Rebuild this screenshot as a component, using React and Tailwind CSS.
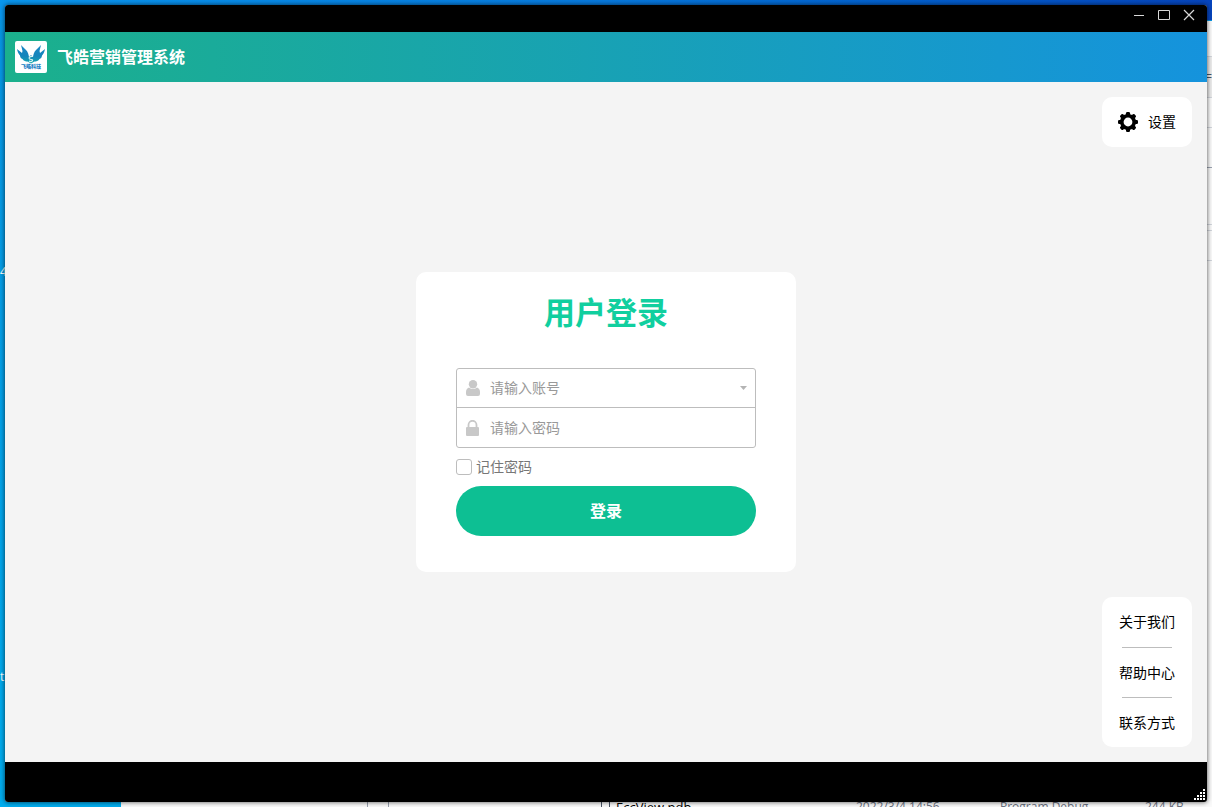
const helpLinks = ["关于我们", "帮助中心", "联系方式"];

const Logo = () => (
    <svg viewBox="0 0 32 32" className="size-8 shrink-0 rounded-xs bg-white" role="img" aria-label="飞皓科技">
        <defs>
            <linearGradient id="wings" x1="0" y1="0" x2="0" y2="1">
                <stop offset="0" stopColor="#1a86c6" />
                <stop offset="0.6" stopColor="#1585bb" />
                <stop offset="1" stopColor="#18a9b0" />
            </linearGradient>
        </defs>
        <path
            d="M2 8 L7 12 L7.500 10 L6 4 L11 9 C13 11 13.500 13 14 16 L16 14 L18 16 C18.500 13 19 11 21 9 L26 4 L24.500 10 L25 12 L30 8 C29.500 11 28.500 13 27 14.500 C27 16 26 17.500 24.500 18 C23.500 20 21 20.500 19.500 20.500 L16 22.500 L12.500 20.500 C11 20.500 8.500 20 7.500 18 C6 17.500 5 16 5 14.500 C3.500 13 2.500 11 2 8Z"
            fill="url(#wings)"
        />
        <path d="M18 15.500 C15 15 13.500 16.500 14.500 17.800 C15.500 19 18 18 17.500 19.500 C17 21 15 20.800 14 20" fill="none" stroke="#d6f5f0" strokeWidth="1.200" />
        <text x="16" y="27" textAnchor="middle" fontSize="5" fontWeight="900" fill="#1b7fc4" className="font-['Noto_Sans_CJK_SC',sans-serif]">
            飞皓科技
        </text>
    </svg>
);

const GearIcon = () => (
    <svg viewBox="0 0 20 20" className="size-5" aria-hidden="true">
        <g fill="#000">
            {[0, 45, 90, 135].map((angle) => (
                <rect key={angle} x="8" y="0" width="4" height="20" rx="1.200" transform={`rotate(${angle} 10 10)`} />
            ))}
            <circle cx="10" cy="10" r="8" />
        </g>
        <circle cx="10" cy="10" r="4.400" fill="#fff" />
    </svg>
);

const UserIcon = () => (
    <svg viewBox="0 0 14 16" className="h-4 w-3.5 shrink-0" fill="#c8c8c8" aria-hidden="true">
        <circle cx="7" cy="4.200" r="4.200" />
        <path d="M3 7.500 Q7 10.500 11 7.500 Q14 8.500 14 12 V14 Q14 16 12 16 H2 Q0 16 0 14 V12 Q0 8.500 3 7.500Z" />
    </svg>
);

const LockIcon = () => (
    <svg viewBox="0 0 14 16" className="h-4 w-3.5 shrink-0" aria-hidden="true">
        <path d="M2.500 8 V5 a4 4.200 0 0 1 8 0 V8" fill="none" stroke="#c8c8c8" strokeWidth="1.800" />
        <rect x="0" y="7" width="13" height="9" rx="1" fill="#c8c8c8" />
    </svg>
);

const ResizeGrip = () => (
    <svg viewBox="0 0 11 11" className="size-[11px]" fill="#fff" aria-hidden="true">
        {[0, 1, 2, 3].map((row) =>
            [0, 1, 2, 3]
                .filter((col) => col + row >= 3)
                .map((col) => <rect key={`${row}-${col}`} x={col * 3} y={row * 3} width="2" height="2" />)
        )}
    </svg>
);

// Whatever of the desktop shows around the edges of the window
const Desktop = () => (
    <div aria-hidden="true" className="absolute inset-0 overflow-hidden bg-linear-to-b from-[#0794e2] to-[#00adef] font-['Open_Sans',sans-serif] text-xs">
        <div className="absolute top-0 right-0 h-5 w-full bg-linear-to-r from-[#0997f0] via-[#0779de] to-[#0644bd]" />
        <div className="absolute top-[21px] right-0 bottom-0 w-20 bg-[#fafafa]">
            <div className="absolute top-[35px] right-0 h-[42px] w-full border-y border-gray-300 bg-[#ececec]" />
            <div className="absolute top-[106px] right-0 h-[41px] w-full border-t border-b border-gray-300 border-b-gray-400" />
            <div className="absolute top-[203px] right-0 h-[7px] w-full border-y border-gray-300" />
            <div className="absolute top-[239px] right-0 h-px w-full bg-gray-300" />
            <span className="absolute top-[48px] right-0 text-gray-600">=</span>
        </div>
        <div className="absolute right-0 bottom-0 left-[121px] h-5 bg-[#fafafa]">
            <div className="absolute bottom-0 left-[246px] h-full w-[22px] border-x border-gray-400" />
            <div className="absolute top-[13px] left-[480px] h-4 w-[9px] border border-gray-600" />
            <span className="absolute top-3 left-[495px] text-[13px] text-black">EccView.pdb</span>
            <span className="absolute top-3 left-[735px] whitespace-nowrap text-gray-500">2022/3/4 14:56</span>
            <span className="absolute top-3 left-[879px] whitespace-nowrap text-gray-500">Program Debug</span>
            <span className="absolute top-3 left-[1024px] whitespace-nowrap text-gray-500">244 KB</span>
        </div>
        <span className="absolute top-[264px] left-0 text-white">4</span>
        <span className="absolute top-[669px] left-0 text-white">t</span>
    </div>
);

const TitleBar = () => (
    <div className="flex h-[27px] shrink-0 items-start justify-end gap-[13px] bg-black pt-1 pr-3 text-[#d8d8d8]">
        <button type="button" aria-label="最小化">
            <svg viewBox="0 0 12 12" className="size-3" stroke="currentColor" fill="none">
                <path d="M1 6.500 H11" />
            </svg>
        </button>
        <button type="button" aria-label="最大化">
            <svg viewBox="0 0 12 12" className="size-3" stroke="currentColor" fill="none">
                <path d="M0.500 1.500 H11.500 V10.500 H0.500Z" />
            </svg>
        </button>
        <button type="button" aria-label="关闭">
            <svg viewBox="0 0 12 12" className="size-3" stroke="currentColor" strokeWidth="1.200" fill="none">
                <path d="M1 1 L11 11 M11 1 L1 11" />
            </svg>
        </button>
    </div>
);

const LoginForm = () => (
    <form className="flex w-[380px] flex-col rounded-[10px] bg-white px-10 pt-4 pb-9" onSubmit={(e) => e.preventDefault()}>
        <h1 className="text-center text-[31px] leading-[46px] font-bold text-[#11cf9f]">用户登录</h1>

        <div className="mt-[34px] rounded-[3px] border border-[#bdbdbd]">
            <div className="flex h-[39px] items-center gap-2.5 border-b border-[#bdbdbd] pr-2 pl-[9px]">
                <UserIcon />
                <input
                    type="text"
                    aria-label="账号"
                    placeholder="请输入账号"
                    className="min-w-0 flex-1 pb-0.5 text-sm outline-none placeholder:text-[#999]"
                />
                <button type="button" aria-label="选择账号">
                    <svg viewBox="0 0 7 4" className="h-1 w-[7px]" fill="#b4b4b4">
                        <path d="M0 0 H7 L3.500 4Z" />
                    </svg>
                </button>
            </div>
            <div className="flex h-[39px] items-center gap-2.5 pr-2 pl-[9px]">
                <LockIcon />
                <input
                    type="password"
                    aria-label="密码"
                    placeholder="请输入密码"
                    className="min-w-0 flex-1 pb-0.5 text-sm outline-none placeholder:text-[#999]"
                />
            </div>
        </div>

        <label className="mt-2 flex h-[22px] items-center gap-1 self-start text-sm text-[#777]">
            <input type="checkbox" className="size-4 appearance-none rounded-[3px] border border-[#bdbdbd] bg-white checked:bg-[#0dbf93]" />
            <span className="pb-0.5">记住密码</span>
        </label>

        <button type="submit" className="mt-2 h-[50px] rounded-full bg-[#0dbf93] pb-0.5 text-base font-bold text-white">
            登录
        </button>
    </form>
);

const App = () => {
    return (
        <div className="relative flex h-screen p-[5px] font-['Noto_Sans_CJK_SC',sans-serif]">
            <Desktop />

            <div className="relative flex min-w-0 flex-1 flex-col overflow-hidden rounded-[3px] bg-[#f4f4f4] shadow-[0_0_5px_rgba(0,0,0,0.7)]">
                <TitleBar />

                <header className="flex h-[50px] shrink-0 items-center gap-2.5 bg-linear-to-r/srgb from-[#1bb08c] to-[#1593dd] px-2.5">
                    <Logo />
                    <span className="pb-0.5 text-base font-bold text-white">飞皓营销管理系统</span>
                </header>

                <main className="grid flex-1 grid-cols-[1fr_auto_1fr] items-center p-[15px]">
                    <div className="col-start-2">
                        <LoginForm />
                    </div>

                    <div className="flex flex-col items-end justify-between self-stretch">
                        <button type="button" className="flex h-[50px] w-[90px] items-center justify-center gap-2.5 rounded-[10px] bg-white text-sm text-black">
                            <GearIcon />
                            <span className="pb-0.5">设置</span>
                        </button>

                        <nav className="flex w-[90px] flex-col rounded-[10px] bg-white px-5 text-sm text-black">
                            {helpLinks.map((label) => (
                                <a
                                    key={label}
                                    href="#"
                                    className="flex h-[50px] items-center justify-center border-[#bdbdbd] pb-0.5 whitespace-nowrap not-first:border-t"
                                >
                                    {label}
                                </a>
                            ))}
                        </nav>
                    </div>
                </main>

                <footer className="flex h-10 shrink-0 items-end justify-end bg-black p-0.5">
                    <ResizeGrip />
                </footer>
            </div>
        </div>
    );
};

export default App;
